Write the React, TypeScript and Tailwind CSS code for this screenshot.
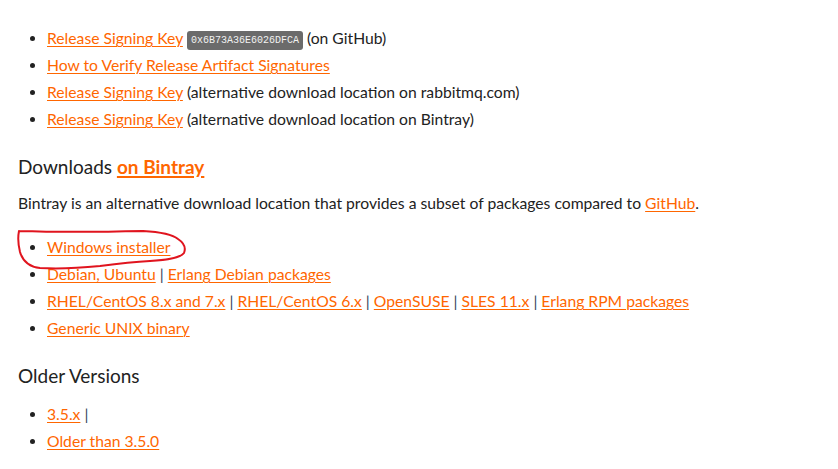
import React from "react";

const link = "text-[#ff6600] underline decoration-1 underline-offset-2";
const sep = <span className="text-[#33475b]"> | </span>;

export default function App() {
  return (
    <div
      className="relative h-[469px] w-[838px] overflow-hidden bg-white pl-[18px] pt-[25px] text-[15.7px] text-[#222]"
      style={{ fontFamily: "Lato, 'Open Sans', sans-serif" }}
    >
      <ul className="list-disc pl-[29px] leading-[27px]">
        <li>
          <a className={link}>Release Signing Key</a>{" "}
          <code className="inline-block rounded-[3px] bg-[#6b6b6b] px-[4px] align-middle font-['Liberation_Mono',monospace] text-[10px] leading-[19px] text-[#f2f2f2]">
            0x6B73A36E6026DFCA
          </code>{" "}
          (on GitHub)
        </li>
        <li>
          <a className={link}>How to Verify Release Artifact Signatures</a>
        </li>
        <li>
          <a className={link}>Release Signing Key</a> (alternative download location on rabbitmq.com)
        </li>
        <li>
          <a className={link}>Release Signing Key</a> (alternative download location on Bintray)
        </li>
      </ul>

      <h2 className="mt-[21px] text-[19px] leading-[26px] text-[#222]">
        Downloads <a className="font-bold text-[#ff6600] underline decoration-2 underline-offset-2">on Bintray</a>
      </h2>

      <p className="mt-[10px] leading-[27px]">
        Bintray is an alternative download location that provides a subset of packages compared to{" "}
        <a className={link}>GitHub</a>.
      </p>

      <ul className="mt-[17px] list-disc pl-[29px] leading-[27px]">
        <li>
          <a className={link}>Windows installer</a>
        </li>
        <li>
          <a className={link}>Debian, Ubuntu</a>
          {sep}
          <a className={link}>Erlang Debian packages</a>
        </li>
        <li>
          <a className={link}>RHEL/CentOS 8.x and 7.x</a>
          {sep}
          <a className={link}>RHEL/CentOS 6.x</a>
          {sep}
          <a className={link}>OpenSUSE</a>
          {sep}
          <a className={link}>SLES 11.x</a>
          {sep}
          <a className={link}>Erlang RPM packages</a>
        </li>
        <li>
          <a className={link}>Generic UNIX binary</a>
        </li>
      </ul>

      <h2 className="mt-[21px] text-[19px] leading-[26px] text-[#222]">Older Versions</h2>

      <ul className="mt-[12px] list-disc pl-[29px] leading-[27px]">
        <li>
          <a className={link}>3.5.x</a>
          <span className="text-[#33475b]"> |</span>
        </li>
        <li>
          <a className={link}>Older than 3.5.0</a>
        </li>
      </ul>

      {/* hand-drawn red circle around the Windows installer link */}
      <svg
        className="pointer-events-none absolute left-0 top-0"
        width="838"
        height="469"
        viewBox="0 0 838 469"
      >
        <path
          d="M19 231 C 50 232, 100 232, 143 231 C 160 232, 172 234, 178 239 C 184 243, 186 248, 184 253 C 180 258, 168 260, 150 261 C 130 262, 115 264, 100 266 C 80 268, 55 269, 40 268 C 30 267, 23 262, 20 252 C 18 244, 18 236, 19 231"
          fill="none"
          stroke="#e0141e"
          strokeWidth="2"
          strokeLinecap="round"
        />
      </svg>
    </div>
  );
}
